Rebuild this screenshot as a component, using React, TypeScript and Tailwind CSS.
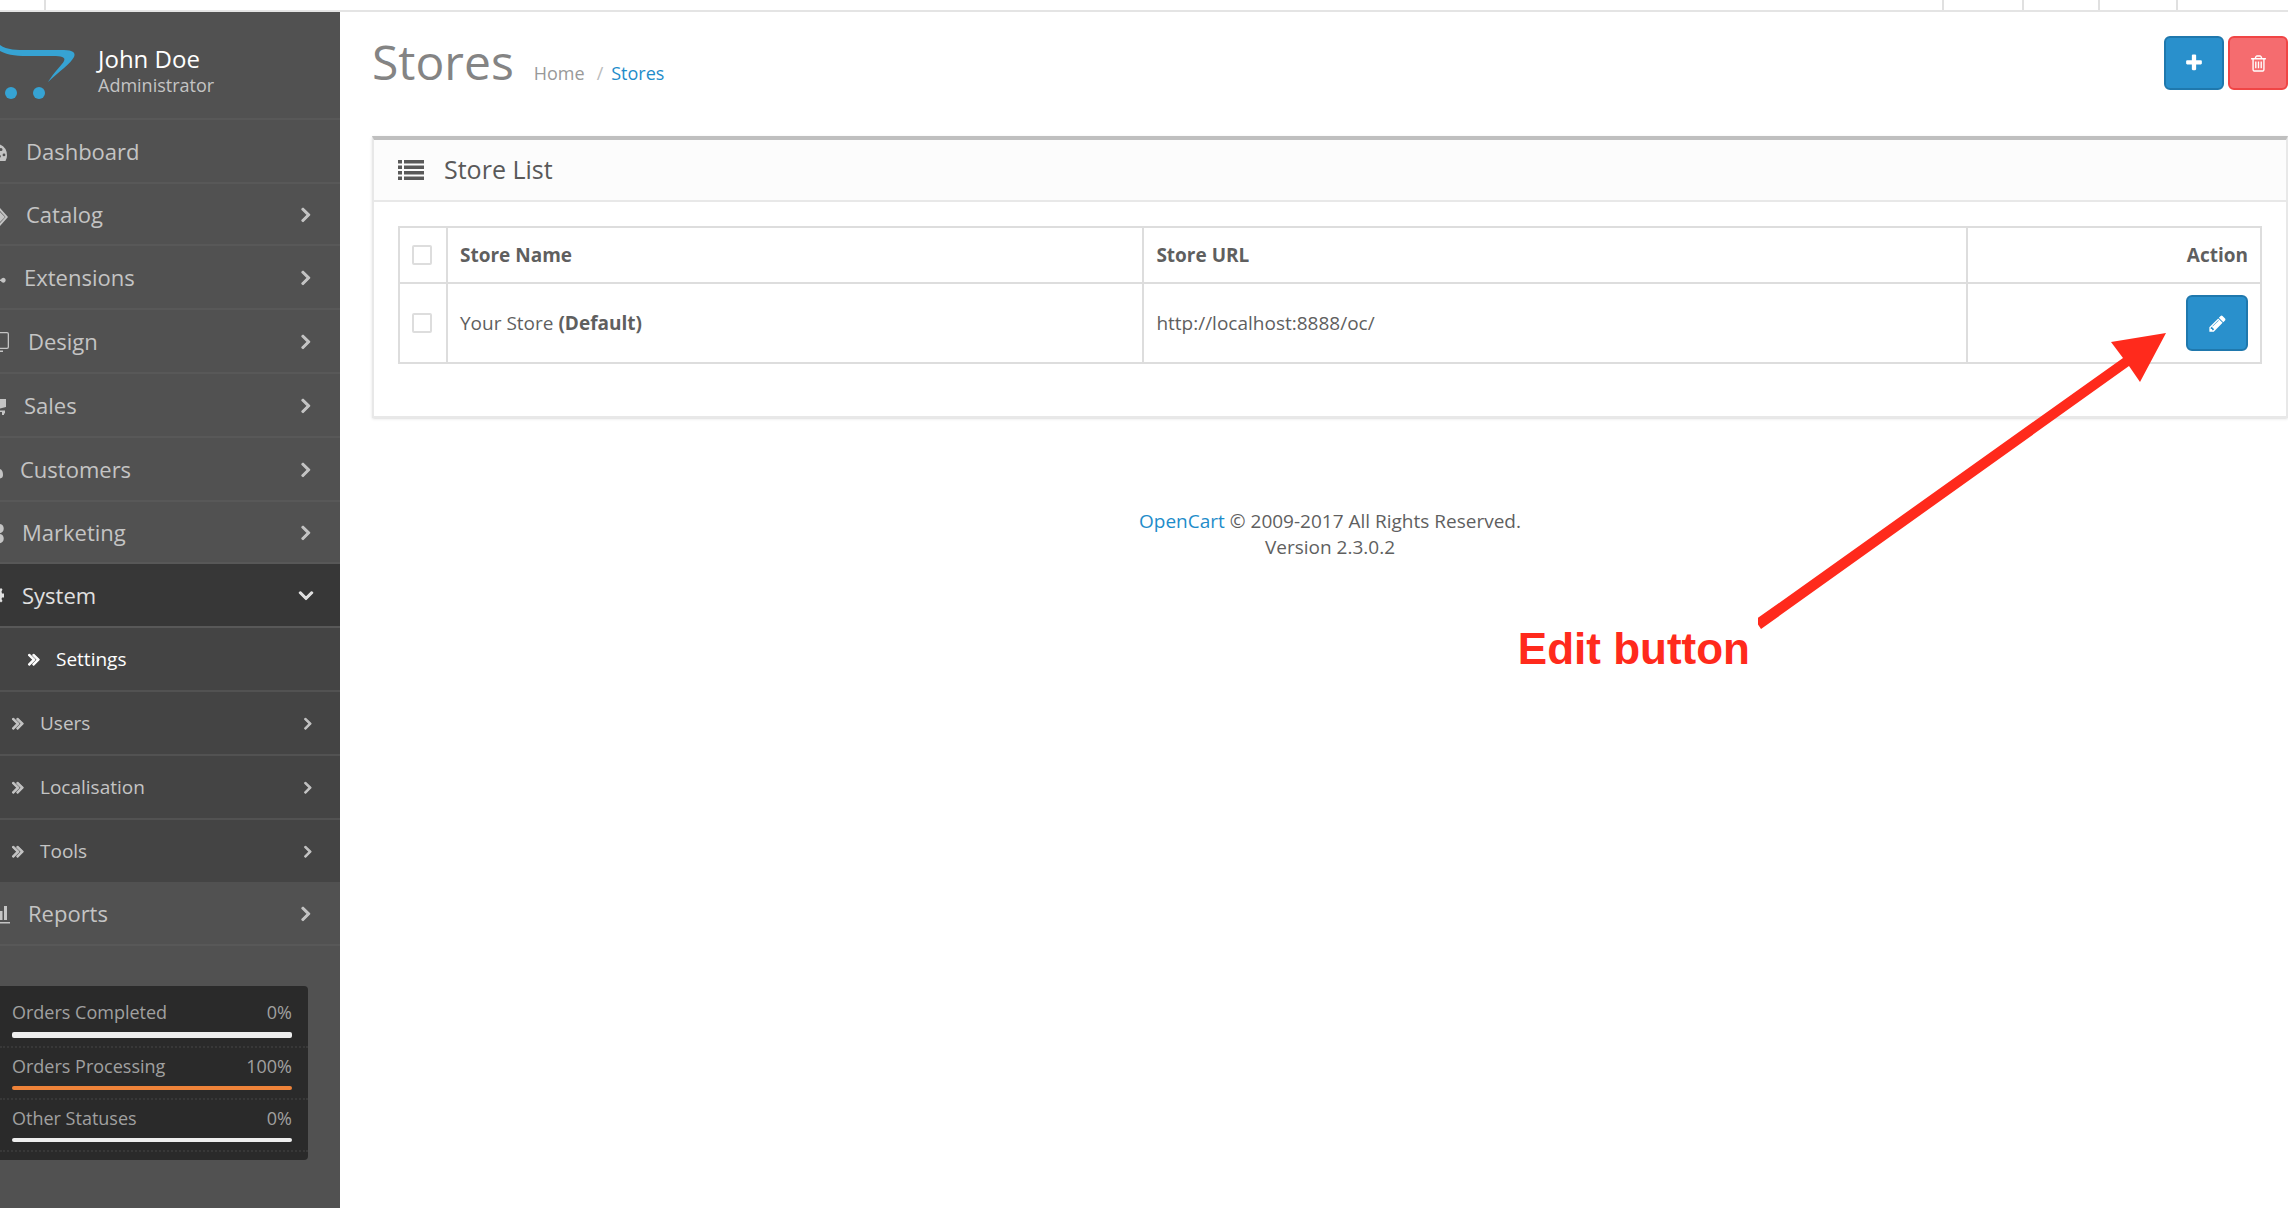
import { useState } from 'react';

const ICONS = {
  angleRight:
    'M1171 960q0 13-10 23l-466 466q-10 10-23 10t-23-10l-50-50q-10-10-10-23t10-23l393-393-393-393q-10-10-10-23t10-23l50-50q10-10 23-10t23 10l466 466q10 10 10 23z',
  angleDown:
    'M1395 736q0 13-10 23l-466 466q-10 10-23 10t-23-10l-466-466q-10-10-10-23t10-23l50-50q10-10 23-10t23 10l393 393 393-393q10-10 23-10t23 10l50 50q10 10 10 23z',
  angleDouble:
    'M979 960q0 13-10 23l-466 466q-10 10-23 10t-23-10l-50-50q-10-10-10-23t10-23l393-393-393-393q-10-10-10-23t10-23l50-50q10-10 23-10t23 10l466 466q10 10 10 23zm384 0q0 13-10 23l-466 466q-10 10-23 10t-23-10l-50-50q-10-10-10-23t10-23l393-393-393-393q-10-10-10-23t10-23l50-50q10-10 23-10t23 10l466 466q10 10 10 23z',
  plus: 'M1600 736v192q0 40-28 68t-68 28h-416v416q0 40-28 68t-68 28h-192q-40 0-68-28t-28-68v-416h-416q-40 0-68-28t-28-68v-192q0-40 28-68t68-28h416v-416q0-40 28-68t68-28h192q40 0 68 28t28 68v416h416q40 0 68 28t28 68z',
  trash:
    'M704 736v576q0 14-9 23t-23 9h-64q-14 0-23-9t-9-23v-576q0-14 9-23t23-9h64q14 0 23 9t9 23zm256 0v576q0 14-9 23t-23 9h-64q-14 0-23-9t-9-23v-576q0-14 9-23t23-9h64q14 0 23 9t9 23zm256 0v576q0 14-9 23t-23 9h-64q-14 0-23-9t-9-23v-576q0-14 9-23t23-9h64q14 0 23 9t9 23zm128 724v-948h-896v948q0 22 7 40.5t14.5 27 10.5 8.5h832q3 0 10.5-8.5t14.5-27 7-40.5zm-672-1076h448l-48-117q-7-9-17-11h-317q-10 2-17 11zm928 32v64q0 14-9 23t-23 9h-96v948q0 83-47 143.5t-113 60.5h-832q-66 0-113-58.5t-47-141.5v-952h-96q-14 0-23-9t-9-23v-64q0-14 9-23t23-9h309l70-167q15-37 54-63t79-26h320q40 0 79 26t54 63l70 167h309q14 0 23 9t9 23z',
  pencil:
    'M491 1536l91-91-235-235-91 91v107h128v128h107zm523-928q0-22-22-22-10 0-17 7l-542 542q-7 7-7 17 0 22 22 22 10 0 17-7l542-542q7-7 7-17zm-54-192l416 416-832 832h-416v-416zm683 96q0 53-37 90l-166 166-416-416 166-165q36-38 90-38 53 0 91 38l235 234q37 39 37 91z',
};

function Icon({ name, className }: { name: keyof typeof ICONS; className: string }) {
  return (
    <svg viewBox="0 0 1792 1792" fill="currentColor" className={className} aria-hidden="true">
      <path d={ICONS[name]} />
    </svg>
  );
}

// Visible right-hand part of each menu icon, the rest is out of view
const glyphs: Record<string, React.ReactNode> = {
  Dashboard: (
    <path
      fillRule="evenodd"
      d="M0 4.500q7 3 7 11 0 3-1.500 5.500H0zM1 8a1.500 1.500 0 1 0 0 3 1.500 1.500 0 0 0 0-3zM4 13.500a1.400 1.400 0 1 0 0 2.800 1.400 1.400 0 0 0 0-2.800zM0 15l1 1-1 2z"
    />
  ),
  Catalog: <path d="M0 8l5 5-5 5zM0 4l8 9-8 9v-3l5.500-6L0 7z" />,
  Extensions: <path d="M0 13.500h1a2.400 2.400 0 1 1 0 1.500H0z" />,
  Design: <path fillRule="evenodd" d="M0 2h7q2 0 2 2v13q0 2-2 2H0v-1.300h7q.7 0 .7-.7V4q0-.7-.7-.7H0zM0 20.500h3V22H0z" />,
  Sales: <path d="M0 5h6v8l-6 1.500zM0 16.500h5v3H4V21H2v-3H0z" />,
  Customers: <path d="M0 11q3 1 3 6 0 3-3 3.500z" />,
  Marketing: <path d="M0 2a4.700 4.700 0 0 1 0 9.200zM0 12a4.700 4.700 0 0 1 0 9.200z" />,
  System: <path d="M0 5l1-1 1.500 1.500-1 2L2 9.500h2v4H2L1.500 15l1 2L1 18.500l-1-1z" />,
  Reports: <path d="M0 9h2.500v9H0zM4 4h3v14H4zM0 20h10v1.500H0z" />,
};

interface MenuItem {
  label: string;
  box: string;
  arrow?: boolean;
  active?: boolean;
}

const menu: MenuItem[] = [
  { label: 'Dashboard', box: 'h-16 pl-[26px]' },
  { label: 'Catalog', box: 'h-[62px] pl-[26px]', arrow: true },
  { label: 'Extensions', box: 'h-16 pl-6', arrow: true },
  { label: 'Design', box: 'h-16 pl-7', arrow: true },
  { label: 'Sales', box: 'h-16 pl-6', arrow: true },
  { label: 'Customers', box: 'h-16 pl-5', arrow: true },
  { label: 'Marketing', box: 'h-[62px] pl-[22px]', arrow: true },
  { label: 'System', box: 'h-16 pl-[22px]', arrow: true, active: true },
  { label: 'Reports', box: 'h-16 pl-7', arrow: true },
];

const subMenu = ['Users', 'Localisation', 'Tools'];

const stats = [
  { label: 'Orders Completed', value: 0, bar: 'h-[6px]' },
  { label: 'Orders Processing', value: 100, bar: 'h-1' },
  { label: 'Other Statuses', value: 0, bar: 'h-1' },
];

function MenuLink({ item }: { item: MenuItem }) {
  return (
    <a
      href="#"
      className={`relative flex items-center border-b-2 border-[#585858] pr-[22px] text-[22px] font-medium ${item.box} ${
        item.active ? 'bg-[#373737] text-[#e0e0e0]' : 'text-[#c4c4c4]'
      }`}
    >
      <svg viewBox="0 0 12 26" className="absolute top-5 left-0 h-[26px] w-3" fill="currentColor" aria-hidden="true">
        {glyphs[item.label]}
      </svg>
      <span className="flex-1">{item.label}</span>
      {item.arrow && (
        <Icon name={item.active ? 'angleDown' : 'angleRight'} className="size-6 stroke-current stroke-[90]" />
      )}
    </a>
  );
}

function Sidebar() {
  return (
    <aside className="w-[340px] shrink-0 overflow-hidden bg-[#515151]">
      <div className="flex h-[108px] items-center border-b-2 border-[#585858] pt-3">
        <svg viewBox="0 0 76 60" className="h-[60px] w-[76px]" fill="#36a3d3" aria-label="OpenCart">
          <path d="M0 4C7 9 17 9 27 9h37c9 0 12 3 10 7-3 6-14 14-26 25 6-10 14-17 16-21 2-4-3-5-11-5H27C14 15 5 13 0 10z" />
          <circle cx="11" cy="52" r="6" />
          <circle cx="39" cy="52" r="6" />
        </svg>
        <div className="ml-[22px]">
          <p className="text-[24px] leading-7 font-medium text-white">John Doe</p>
          <p className="text-[18px] leading-6 text-[#c4c4c4]">Administrator</p>
        </div>
      </div>
      <nav>
        {menu.map((item) => (
          <div key={item.label}>
            <MenuLink item={item} />
            {item.active && (
              <div className="bg-[#444444] text-[19px] text-[#c4c4c4]">
                <a href="#" className="flex h-16 items-center border-b-2 border-[#525252] pl-6 font-medium text-white">
                  <Icon name="angleDouble" className="mr-3 size-5 stroke-current stroke-[90]" />
                  Settings
                </a>
                {subMenu.map((label) => (
                  <a
                    key={label}
                    href="#"
                    className="flex h-16 items-center border-b-2 border-[#525252] pr-[22px] pl-2 last:h-[62px] last:border-b-0"
                  >
                    <Icon name="angleDouble" className="mr-3 size-5 stroke-current stroke-[90]" />
                    <span className="flex-1">{label}</span>
                    <Icon name="angleRight" className="size-5 stroke-current stroke-[90]" />
                  </a>
                ))}
              </div>
            )}
          </div>
        ))}
      </nav>
      <div className="mt-10 mr-8 rounded-r-sm bg-[#2a2a2a] py-2 text-[18px] text-[#a0a0a0]">
        {stats.map((s) => (
          <div key={s.label} className="border-b-2 border-dotted border-[#383838] pt-[6px] pr-4 pb-2 pl-3">
            <div className="flex justify-between leading-6">
              <span>{s.label}</span>
              <span>{s.value}%</span>
            </div>
            <div className={`mt-2 overflow-hidden rounded-xs bg-[#eeeeee] ${s.bar}`}>
              <div className="h-full bg-[#ef8339]" style={{ width: `${s.value}%` }} />
            </div>
          </div>
        ))}
      </div>
    </aside>
  );
}

const checkbox = 'block size-5 appearance-none rounded-xs border-2 border-[#dddddd] bg-white checked:bg-[#2990cc]';

function StoreTable() {
  const [selected, setSelected] = useState(false);

  return (
    <table className="w-full border-collapse text-left text-[19px] leading-7 [&_td]:border-2 [&_td]:border-[#dddddd] [&_th]:border-2 [&_th]:border-[#dddddd]">
      <thead>
        <tr className="h-14">
          <th className="w-12 px-3">
            <input
              type="checkbox"
              aria-label="Select all stores"
              className={checkbox}
              checked={selected}
              onChange={(e) => setSelected(e.target.checked)}
            />
          </th>
          <th className="w-[37.4%] px-3">Store Name</th>
          <th className="px-3">Store URL</th>
          <th className="w-[294px] px-3 text-right">Action</th>
        </tr>
      </thead>
      <tbody>
        <tr className="h-20">
          <td className="px-3">
            <input
              type="checkbox"
              aria-label="Select Your Store"
              className={checkbox}
              checked={selected}
              onChange={(e) => setSelected(e.target.checked)}
            />
          </td>
          <td className="px-3">
            Your Store <b>(Default)</b>
          </td>
          <td className="px-3">http://localhost:8888/oc/</td>
          <td className="px-3">
            <button
              aria-label="Edit"
              className="ml-auto flex h-14 w-[62px] items-center justify-center rounded-md border-2 border-[#1f78ad] bg-[#2990cc] text-white"
            >
              <Icon name="pencil" className="size-[19px]" />
            </button>
          </td>
        </tr>
      </tbody>
    </table>
  );
}

export default function App() {
  return (
    <div className="relative flex min-h-screen flex-col overflow-hidden bg-white font-['Open_Sans',sans-serif] text-[#5f5f5f]">
      {/* Bottom edge of the top bar */}
      <header className="flex h-3 shrink-0 justify-between border-b-2 border-[#e4e4e4]">
        <div className="w-[46px] border-r-2 border-[#e0e0e0]" />
        <div className="flex">
          <div className="w-20 border-l-2 border-[#e0e0e0]" />
          <div className="w-[76px] border-l-2 border-[#e0e0e0]" />
          <div className="w-[78px] border-l-2 border-[#e0e0e0]" />
          <div className="w-28 border-l-2 border-[#e0e0e0]" />
        </div>
      </header>

      <div className="flex flex-1">
        <Sidebar />
        <main className="min-w-0 flex-1 pl-8">
          <div className="flex h-[124px] items-start justify-between pt-6">
            <div className="flex items-baseline">
              <h1 className="text-[48px] leading-[52px] text-[#848484]">Stores</h1>
              <nav className="ml-5 flex text-[18px]">
                <a href="#" className="text-[#999999]">Home</a>
                <span className="mr-2 ml-3 text-[#bbbbbb]">/</span>
                <a href="#" className="text-[#1e8cca]">Stores</a>
              </nav>
            </div>
            <div className="flex gap-1">
              <button
                aria-label="Add New"
                className="flex h-[54px] w-[60px] items-center justify-center rounded-md border-2 border-[#1f78ad] bg-[#2990cc] text-white"
              >
                <Icon name="plus" className="size-5" />
              </button>
              <button
                aria-label="Delete"
                className="flex h-[54px] w-[60px] items-center justify-center rounded-md border-2 border-[#f04545] bg-[#f56c6f] text-white"
              >
                <Icon name="trash" className="size-[19px]" />
              </button>
            </div>
          </div>

          <section className="border-2 border-t-4 border-[#e8e8e8] border-t-[#bfbfbf] shadow-sm">
            <div className="flex h-[62px] items-center border-b-2 border-[#e8e8e8] bg-[#fcfcfc] pl-6 text-[#595959]">
              <svg viewBox="0 0 26 20" className="h-5 w-[26px]" fill="currentColor" aria-hidden="true">
                <path d="M0 0h4v3.500H0zM6 0h20v3.500H6zM0 5.500h4V9H0zM6 5.500h20V9H6zM0 11h4v3.500H0zM6 11h20v3.500H6zM0 16.500h4V20H0zM6 16.500h20V20H6z" />
              </svg>
              <h2 className="ml-5 text-[25px]">Store List</h2>
            </div>
            <div className="px-6 pt-6 pb-[52px]">
              <StoreTable />
            </div>
          </section>

          <footer className="mt-[90px] text-center text-[19px] leading-[26px]">
            <a href="#" className="text-[#1e8cca]">OpenCart</a> © 2009-2017 All Rights Reserved.
            <br />
            Version 2.3.0.2
          </footer>
        </main>
      </div>

      {/* Callout pinned over the page */}
      <svg viewBox="0 0 410 300" className="pointer-events-none absolute top-[330px] right-[120px] h-[300px] w-[410px]" fill="#ff2a1c" aria-hidden="true">
        <path d="M408 3L382 52L371 36L3 299L-3 290L365 28L353 12z" />
      </svg>
      <p className="absolute top-[624px] right-[538px] font-['Liberation_Sans',sans-serif] text-[44px] leading-[50px] font-bold text-[#ff2a1c]">
        Edit button
      </p>
    </div>
  );
}
